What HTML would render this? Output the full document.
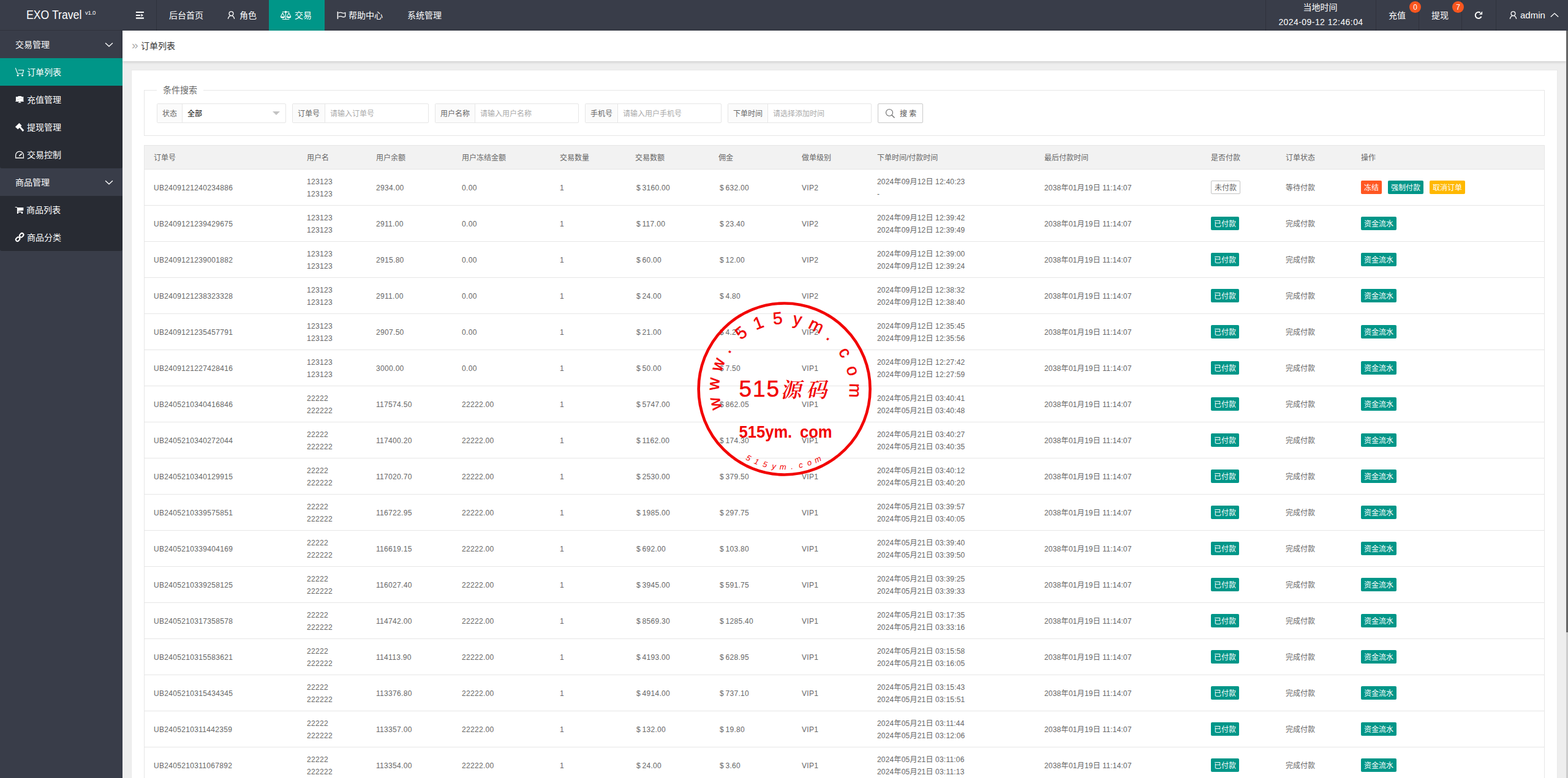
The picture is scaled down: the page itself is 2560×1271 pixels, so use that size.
<!DOCTYPE html>
<html lang="zh-CN">
<head>
<meta charset="utf-8">
<title>订单列表 · EXO Travel</title>
<style>
*{box-sizing:border-box}
html,body{margin:0;padding:0}
body{width:2560px;height:1271px;overflow:hidden;position:relative;background:#eee;font-family:"Liberation Sans","Noto Sans CJK SC",sans-serif;font-size:14px;color:#333;line-height:20px}
.side{position:absolute;left:0;top:0;width:200px;height:1271px;background:#393d49;color:#fff}
.logo{position:absolute;left:0;top:0;width:200px;height:50px;border-bottom:1px solid #30333d;white-space:nowrap}
.logo b{position:absolute;left:42.8px;top:0;height:50px;line-height:49px;font-weight:normal;font-size:19.5px;transform:scaleX(.906);transform-origin:0 0}
.logo sup{position:absolute;left:139px;top:14px;font-size:9.5px;line-height:14px;font-weight:normal;letter-spacing:-.2px}
.grp{position:absolute;left:0;width:200px;height:45px;line-height:47px;padding-left:25px;font-size:14px}
.grp svg{position:absolute}
.sub{position:absolute;left:0;width:200px;background:#282b33;border-radius:0 0 3px 3px}
.it{position:relative;height:45px;line-height:47px;padding-left:44px;font-size:14px;white-space:nowrap}
.it.on{background:#009688}
.it svg{position:absolute;left:20px;top:10px}
.head{position:absolute;left:200px;top:0;width:2360px;height:50px;background:#393d49;color:#fff}
.nv{position:absolute;top:0;height:50px;line-height:50px;font-size:14px;white-space:nowrap}
.nv.on{background:#009688}
.nv svg{position:absolute}
.vl{position:absolute;top:0;width:1px;height:50px;background:#30333d}
.crumb{position:absolute;left:200px;top:50px;width:2357px;height:50px;background:#fff;box-shadow:0 1px 5px rgba(0,0,0,.18);line-height:50px;font-size:14px;color:#333}
.crumb .raq{position:absolute;left:15px;top:-1px;color:#aaa;font-size:19px}
.crumb .ttl{position:absolute;left:30px;top:0}
.card{position:absolute;left:215px;top:115px;width:2327px;height:1200px;background:#fff;box-shadow:0 0 0 1px #e9e9e9}
.fs{position:absolute;left:20px;top:32px;width:2287px;height:75px;border:1px solid #e6e6e6}
.lg{position:absolute;left:20px;top:-11px;height:20px;line-height:20px;padding:0 10px;background:#fff;font-size:14px;color:#666}
.ig{position:absolute;top:21px;height:32px;border:1px solid #e6e6e6;border-radius:2px;background:#fff;font-size:12px;line-height:32px;white-space:nowrap}
.ig b{position:absolute;left:0;top:0;height:30px;font-weight:normal;background:#fbfbfb;border-right:1px solid #e6e6e6;color:#666;text-align:center}
.ig u{position:absolute;top:0;height:30px;text-decoration:none;color:#aaa}
.ig u.v{color:#000}
.tri{position:absolute;right:9px;top:12px;width:0;height:0;border:6px solid transparent;border-top-color:#c2c2c2}
.sb{position:absolute;top:21px;height:32px;border:1px solid #c9c9c9;border-radius:2px;background:#fff;font-size:12px;line-height:32px;color:#555;white-space:nowrap}
.tb{position:absolute;left:20px;top:122px;width:2287px;border-collapse:separate;border-spacing:0;table-layout:fixed;border:1px solid #e6e6e6;border-bottom:0;font-size:12px;color:#666}
.tb th{height:39px;padding:10px 15px 8px;background:#f2f2f2;border-bottom:1px solid #e6e6e6;text-align:left;font-weight:normal;line-height:20px;white-space:nowrap}
.tb td{height:59px;padding:10px 15px 8px;border-bottom:1px solid #e6e6e6;line-height:20px;white-space:nowrap;letter-spacing:.32px;vertical-align:middle}
.tb td.c{letter-spacing:0}
.tb td.m{padding-left:17px;word-spacing:-1.2px}
.tb td.t{letter-spacing:.2px}
.bdg{display:inline-block;height:22px;line-height:24px;position:relative;top:-1px;padding:0 5px;border-radius:2px;color:#fff;font-size:12px;vertical-align:middle}
.bdg.g{background:#009688}
.bdg.rim{border:1px solid #c2c2c2;background:#fff;color:#666;line-height:22px;padding:0 5px}
.btn{display:inline-block;height:22px;line-height:24px;position:relative;top:-1px;padding:0 5px;border-radius:2px;color:#fff;font-size:12px;margin-right:10px;vertical-align:middle}
.btn.g{background:#009688}.btn.o{background:#ff5722}.btn.y{background:#ffb800}
.sbar{position:absolute;left:2557px;top:50px;width:3px;height:1221px;background:#ccc}
.sbar i{position:absolute;left:0;top:0;width:3px;height:983px;background:#666}
.stamp{position:absolute;left:1130px;top:485px}
.dot{position:absolute;z-index:3;top:2px;width:19px;height:19px;border-radius:50%;background:#f9561f;color:#fff;font-size:12px;line-height:21px;text-align:center}

</style>
</head>
<body>
<div class="side">
<div class="logo"><b>EXO Travel</b><sup>v1.0</sup></div>
<div class="grp" style="top:50px">交易管理<svg style="left:165px;top:10px" width="25" height="25" viewBox="165 60 25 25"><path d="M172.100 70.200L178 75.800 183.900 70.200" fill="none" stroke="#fff" stroke-width="1.350"/></svg></div>
<div class="sub" style="top:95px;height:180px">
<div class="it on"><svg width="25" height="25" viewBox="20 105 25 25"><path d="M25.400 111.400L28.800 120.200H37.100L38.600 114.500H30.300" fill="none" stroke="#fff" stroke-width="1.150" stroke-linecap="round" stroke-linejoin="round"/><circle cx="29.100" cy="123.300" r="1.450" fill="#fff"/><circle cx="36.500" cy="123.300" r="1.450" fill="#fff"/></svg>订单列表</div>
<div class="it"><svg width="25" height="25" viewBox="20 150 25 25"><path d="M25.900 157.900H29.500V157H35V157.900H38.300V165L39.200 165.900H24.800L25.900 165Z M31.500 165.900H33V167.100H34.300V168H29.700V167.100H31.500Z" fill="#fff"/><path d="M28 162.600L30.800 162.200 33.500 160.800 35.800 160.400" fill="none" stroke="#bbb" stroke-width=".7"/></svg>充值管理</div>
<div class="it"><svg width="25" height="25" viewBox="20 195 25 25"><path d="M24.900 207.200L31.400 200.900 35.500 205.200 29.200 211.300Z M31.800 208.400L33.800 206.800 39.300 212.700 37.100 215.100Z" fill="#fff"/></svg>提现管理</div>
<div class="it"><svg width="25" height="25" viewBox="20 240 25 25"><path d="M25.600 257.500V253.800A6.400 6.400 0 0 1 38.400 253.800V257.500" fill="none" stroke="#fff" stroke-width="1.300"/><rect x="24.900" y="257.100" width="14.200" height="1.900" fill="#d2d2d2"/><path d="M31.800 254.400L35.200 251.500" fill="none" stroke="#fff" stroke-width="1.700" stroke-linecap="round"/></svg>交易控制</div>
</div>
<div class="grp" style="top:275px">商品管理<svg style="left:165px;top:10px" width="25" height="25" viewBox="165 60 25 25"><path d="M172.100 70.200L178 75.800 183.900 70.200" fill="none" stroke="#fff" stroke-width="1.350"/></svg></div>
<div class="sub" style="top:320px;height:90px">
<div class="it" style="padding-left:43px"><svg width="25" height="25" viewBox="20 330 25 25"><path d="M24.700 338H27.800L28.200 339H38.300V343.800L29.500 344.800V345.700H37.100V348.900H34.900V347.100H30V348.900H27.900V340L27.200 338.900H24.700Z" fill="#fff"/></svg>商品列表</div>
<div class="it"><svg width="25" height="25" viewBox="20 375 25 25"><g fill="none" stroke="#fff" stroke-width="2"><rect x="-3.500" y="-2.600" width="7" height="5.200" rx="2.600" transform="translate(35.200 384.300) rotate(-45)"/><rect x="-3.500" y="-2.600" width="7" height="5.200" rx="2.600" transform="translate(29.100 390.700) rotate(-45)"/></g></svg>商品分类</div>
</div>
</div>

<div class="head">
<div class="nv" style="left:0;width:55px"><svg style="left:15px;top:12px" width="25" height="25" viewBox="215 12 25 25"><path d="M221.900 19H234.900V21H221.900Z M221.900 24H229V26H221.900Z M221.900 28.600H234.900V30.700H221.900Z M230.400 22.600L234 24.900 230.400 27.200Z" fill="#fff"/></svg></div>
<div class="vl" style="left:55px"></div>
<div class="nv" style="left:56px;width:96px;padding-left:20px">后台首页</div>
<div class="nv" style="left:152px;width:87px;padding-left:39px"><svg style="left:13px;top:12px" width="25" height="25" viewBox="-12.500 12 25 25"><g fill="none" stroke="#fff" stroke-width="1.300"><circle cx="0" cy="22.200" r="3.400"/><path d="M-5.100 31A5.100 5.300 0 0 1 5.100 31"/></g></svg>角色</div>
<div class="nv on" style="left:239px;width:91px;padding-left:42px"><svg style="left:15px;top:12px" width="25" height="25" viewBox="455 12 25 25"><g fill="none" stroke="#fff" stroke-width="1.050"><path d="M461.900 19.500H473.300 M467.500 20.500V31.500 M461.900 31.500H473.300"/><circle cx="467.500" cy="19.500" r="1.200"/><path d="M459.300 27.200L462.500 21.300 465.700 27.200 M469.400 27.200L472.600 21.300 475.800 27.200"/></g><path d="M458.900 27A3.600 2.800 0 0 0 466.100 27Z M469 27A3.600 2.800 0 0 0 476.200 27Z" fill="#fff"/></svg>交易</div>
<div class="nv" style="left:330px;width:115px;padding-left:39px"><svg style="left:15px;top:12px" width="25" height="25" viewBox="545 12 25 25"><path d="M550.600 18.900H552.200V31.100H550.600Z" fill="#fff"/><path d="M552.600 21.300C555 20 557 20.300 558.800 21.100C560.500 21.800 562 21.700 563.700 20.800V27C562 28 560.500 28 558.800 27.300C557 26.500 555 26.300 552.600 27.500" fill="none" stroke="#fff" stroke-width="1.300"/></svg>帮助中心</div>
<div class="nv" style="left:445px;width:96px;padding-left:20px">系统管理</div>

<div class="vl" style="left:1866px"></div>
<div class="nv" style="left:1867px;width:179px;text-align:center;line-height:24px"><div style="height:24px;position:relative;left:-1px">当地时间</div><div style="height:24px;letter-spacing:.43px">2024-09-12 12:46:04</div></div>
<div class="vl" style="left:2046px"></div>
<div class="nv" style="left:2047px;width:69px;padding-left:20px">充值<span class="dot" style="left:54px">0</span></div>
<div class="vl" style="left:2116px"></div>
<div class="nv" style="left:2117px;width:69px;padding-left:20px">提现<span class="dot" style="left:54px">7</span></div>
<div class="vl" style="left:2186px"></div>
<div class="nv" style="left:2187px;width:55px"><svg style="left:13px;top:12px" width="25" height="25" viewBox="2400 12 25 25"><path d="M2416.700 20.600A5.100 5.100 0 1 0 2418.500 27" fill="none" stroke="#fff" stroke-width="2"/><path d="M2420.100 18.500V23.800H2414.900Z" fill="#fff"/></svg></div>
<div class="vl" style="left:2242px"></div>
<div class="nv" style="left:2243px;width:117px;padding-left:39px;font-size:15px"><svg style="left:14.500px;top:12px" width="25" height="25" viewBox="-12.500 12 25 25"><g fill="none" stroke="#fff" stroke-width="1.300"><circle cx="0" cy="22.200" r="3.400"/><path d="M-5.100 31A5.100 5.300 0 0 1 5.100 31"/></g></svg>admin<svg style="left:83px;top:12px" width="25" height="25" viewBox="2526 12 25 25"><path d="M2531.800 27.500L2538 21.800 2544.200 27.500" fill="none" stroke="#fff" stroke-width="1.350"/></svg></div>
</div>

<div class="crumb"><span class="raq">»</span><span class="ttl">订单列表</span></div>
<div class="card">
<div class="fs"><div class="lg">条件搜索</div>
<div class="ig" style="left:20px;width:211px"><b style="width:41px">状态</b><u class="v" style="left:49px">全部</u><i class="tri"></i></div>
<div class="ig" style="left:241px;width:223px"><b style="width:53px">订单号</b><u style="left:61px">请输入订单号</u></div>
<div class="ig" style="left:474px;width:235px"><b style="width:65px">用户名称</b><u style="left:73px">请输入用户名称</u></div>
<div class="ig" style="left:719px;width:223px"><b style="width:53px">手机号</b><u style="left:61px">请输入用户手机号</u></div>
<div class="ig" style="left:952px;width:235px"><b style="width:65px">下单时间</b><u style="left:73px">请选择添加时间</u></div>
<div class="sb" style="left:1197px;width:74px"><svg style="position:absolute;left:11px;top:7px" width="17" height="17" viewBox="0 0 17 17"><circle cx="7" cy="7" r="5.5" fill="none" stroke="#666" stroke-width="1.1"/><path d="M11 11l4.500 4.500" stroke="#666" stroke-width="1.300" fill="none"/></svg><span style="position:absolute;left:35px;top:0">搜 索</span></div>
</div>

<table class="tb"><colgroup><col style="width:250px"><col style="width:113px"><col style="width:140px"><col style="width:160px"><col style="width:123px"><col style="width:136px"><col style="width:136px"><col style="width:123px"><col style="width:273px"><col style="width:272px"><col style="width:122px"><col style="width:123px"><col style="width:314px"></colgroup>
<thead><tr><th>订单号</th><th>用户名</th><th>用户余额</th><th>用户冻结金额</th><th>交易数量</th><th>交易数额</th><th>佣金</th><th>做单级别</th><th>下单时间/付款时间</th><th>最后付款时间</th><th>是否付款</th><th>订单状态</th><th>操作</th></tr></thead><tbody>
<tr><td>UB2409121240234886</td><td>123123<br>123123</td><td>2934.00</td><td>0.00</td><td>1</td><td class="m">$ 3160.00</td><td class="m">$ 632.00</td><td>VIP2</td><td class="t">2024年09月12日 12:40:23<br>-</td><td class="t">2038年01月19日 11:14:07</td><td class="c"><span class="bdg rim">未付款</span></td><td class="c">等待付款</td><td class="c"><span class="btn o">冻结</span><span class="btn g">强制付款</span><span class="btn y">取消订单</span></td></tr>
<tr><td>UB2409121239429675</td><td>123123<br>123123</td><td>2911.00</td><td>0.00</td><td>1</td><td class="m">$ 117.00</td><td class="m">$ 23.40</td><td>VIP2</td><td class="t">2024年09月12日 12:39:42<br>2024年09月12日 12:39:49</td><td class="t">2038年01月19日 11:14:07</td><td class="c"><span class="bdg g">已付款</span></td><td class="c">完成付款</td><td class="c"><span class="btn g">资金流水</span></td></tr>
<tr><td>UB2409121239001882</td><td>123123<br>123123</td><td>2915.80</td><td>0.00</td><td>1</td><td class="m">$ 60.00</td><td class="m">$ 12.00</td><td>VIP2</td><td class="t">2024年09月12日 12:39:00<br>2024年09月12日 12:39:24</td><td class="t">2038年01月19日 11:14:07</td><td class="c"><span class="bdg g">已付款</span></td><td class="c">完成付款</td><td class="c"><span class="btn g">资金流水</span></td></tr>
<tr><td>UB2409121238323328</td><td>123123<br>123123</td><td>2911.00</td><td>0.00</td><td>1</td><td class="m">$ 24.00</td><td class="m">$ 4.80</td><td>VIP2</td><td class="t">2024年09月12日 12:38:32<br>2024年09月12日 12:38:40</td><td class="t">2038年01月19日 11:14:07</td><td class="c"><span class="bdg g">已付款</span></td><td class="c">完成付款</td><td class="c"><span class="btn g">资金流水</span></td></tr>
<tr><td>UB2409121235457791</td><td>123123<br>123123</td><td>2907.50</td><td>0.00</td><td>1</td><td class="m">$ 21.00</td><td class="m">$ 4.20</td><td>VIP2</td><td class="t">2024年09月12日 12:35:45<br>2024年09月12日 12:35:56</td><td class="t">2038年01月19日 11:14:07</td><td class="c"><span class="bdg g">已付款</span></td><td class="c">完成付款</td><td class="c"><span class="btn g">资金流水</span></td></tr>
<tr><td>UB2409121227428416</td><td>123123<br>123123</td><td>3000.00</td><td>0.00</td><td>1</td><td class="m">$ 50.00</td><td class="m">$ 7.50</td><td>VIP1</td><td class="t">2024年09月12日 12:27:42<br>2024年09月12日 12:27:59</td><td class="t">2038年01月19日 11:14:07</td><td class="c"><span class="bdg g">已付款</span></td><td class="c">完成付款</td><td class="c"><span class="btn g">资金流水</span></td></tr>
<tr><td>UB2405210340416846</td><td>22222<br>222222</td><td>117574.50</td><td>22222.00</td><td>1</td><td class="m">$ 5747.00</td><td class="m">$ 862.05</td><td>VIP1</td><td class="t">2024年05月21日 03:40:41<br>2024年05月21日 03:40:48</td><td class="t">2038年01月19日 11:14:07</td><td class="c"><span class="bdg g">已付款</span></td><td class="c">完成付款</td><td class="c"><span class="btn g">资金流水</span></td></tr>
<tr><td>UB2405210340272044</td><td>22222<br>222222</td><td>117400.20</td><td>22222.00</td><td>1</td><td class="m">$ 1162.00</td><td class="m">$ 174.30</td><td>VIP1</td><td class="t">2024年05月21日 03:40:27<br>2024年05月21日 03:40:35</td><td class="t">2038年01月19日 11:14:07</td><td class="c"><span class="bdg g">已付款</span></td><td class="c">完成付款</td><td class="c"><span class="btn g">资金流水</span></td></tr>
<tr><td>UB2405210340129915</td><td>22222<br>222222</td><td>117020.70</td><td>22222.00</td><td>1</td><td class="m">$ 2530.00</td><td class="m">$ 379.50</td><td>VIP1</td><td class="t">2024年05月21日 03:40:12<br>2024年05月21日 03:40:20</td><td class="t">2038年01月19日 11:14:07</td><td class="c"><span class="bdg g">已付款</span></td><td class="c">完成付款</td><td class="c"><span class="btn g">资金流水</span></td></tr>
<tr><td>UB2405210339575851</td><td>22222<br>222222</td><td>116722.95</td><td>22222.00</td><td>1</td><td class="m">$ 1985.00</td><td class="m">$ 297.75</td><td>VIP1</td><td class="t">2024年05月21日 03:39:57<br>2024年05月21日 03:40:05</td><td class="t">2038年01月19日 11:14:07</td><td class="c"><span class="bdg g">已付款</span></td><td class="c">完成付款</td><td class="c"><span class="btn g">资金流水</span></td></tr>
<tr><td>UB2405210339404169</td><td>22222<br>222222</td><td>116619.15</td><td>22222.00</td><td>1</td><td class="m">$ 692.00</td><td class="m">$ 103.80</td><td>VIP1</td><td class="t">2024年05月21日 03:39:40<br>2024年05月21日 03:39:50</td><td class="t">2038年01月19日 11:14:07</td><td class="c"><span class="bdg g">已付款</span></td><td class="c">完成付款</td><td class="c"><span class="btn g">资金流水</span></td></tr>
<tr><td>UB2405210339258125</td><td>22222<br>222222</td><td>116027.40</td><td>22222.00</td><td>1</td><td class="m">$ 3945.00</td><td class="m">$ 591.75</td><td>VIP1</td><td class="t">2024年05月21日 03:39:25<br>2024年05月21日 03:39:33</td><td class="t">2038年01月19日 11:14:07</td><td class="c"><span class="bdg g">已付款</span></td><td class="c">完成付款</td><td class="c"><span class="btn g">资金流水</span></td></tr>
<tr><td>UB2405210317358578</td><td>22222<br>222222</td><td>114742.00</td><td>22222.00</td><td>1</td><td class="m">$ 8569.30</td><td class="m">$ 1285.40</td><td>VIP1</td><td class="t">2024年05月21日 03:17:35<br>2024年05月21日 03:33:16</td><td class="t">2038年01月19日 11:14:07</td><td class="c"><span class="bdg g">已付款</span></td><td class="c">完成付款</td><td class="c"><span class="btn g">资金流水</span></td></tr>
<tr><td>UB2405210315583621</td><td>22222<br>222222</td><td>114113.90</td><td>22222.00</td><td>1</td><td class="m">$ 4193.00</td><td class="m">$ 628.95</td><td>VIP1</td><td class="t">2024年05月21日 03:15:58<br>2024年05月21日 03:16:05</td><td class="t">2038年01月19日 11:14:07</td><td class="c"><span class="bdg g">已付款</span></td><td class="c">完成付款</td><td class="c"><span class="btn g">资金流水</span></td></tr>
<tr><td>UB2405210315434345</td><td>22222<br>222222</td><td>113376.80</td><td>22222.00</td><td>1</td><td class="m">$ 4914.00</td><td class="m">$ 737.10</td><td>VIP1</td><td class="t">2024年05月21日 03:15:43<br>2024年05月21日 03:15:51</td><td class="t">2038年01月19日 11:14:07</td><td class="c"><span class="bdg g">已付款</span></td><td class="c">完成付款</td><td class="c"><span class="btn g">资金流水</span></td></tr>
<tr><td>UB2405210311442359</td><td>22222<br>222222</td><td>113357.00</td><td>22222.00</td><td>1</td><td class="m">$ 132.00</td><td class="m">$ 19.80</td><td>VIP1</td><td class="t">2024年05月21日 03:11:44<br>2024年05月21日 03:12:06</td><td class="t">2038年01月19日 11:14:07</td><td class="c"><span class="bdg g">已付款</span></td><td class="c">完成付款</td><td class="c"><span class="btn g">资金流水</span></td></tr>
<tr><td>UB2405210311067892</td><td>22222<br>222222</td><td>113354.00</td><td>22222.00</td><td>1</td><td class="m">$ 24.00</td><td class="m">$ 3.60</td><td>VIP1</td><td class="t">2024年05月21日 03:11:06<br>2024年05月21日 03:11:13</td><td class="t">2038年01月19日 11:14:07</td><td class="c"><span class="bdg g">已付款</span></td><td class="c">完成付款</td><td class="c"><span class="btn g">资金流水</span></td></tr>
</tbody></table>
</div>
<div class="sbar"><i></i></div>
<svg class="stamp" width="300" height="300" viewBox="0 0 300 300" font-family="'Liberation Sans','Noto Sans CJK SC',sans-serif" fill="#f20000">
<circle cx="150.6" cy="150.5" r="140" fill="none" stroke="#f20000" stroke-width="4.6"/>
<text font-size="28" stroke="#f20000" stroke-width=".5" x="48.5 43.6 47.2 60.4 79.5 104.3 132.8 163.5 188.2 217.4 238.3 251.5 257.3" y="182.5 153 123.2 93.7 70.9 54.3 45.2 44.6 50.2 67.5 89.6 115.6 141.1" rotate="-102 -85.9 -69.8 -55.7 -37.6 -21.5 -5.4 10.7 26.8 40.9 59 75.1 91.2">www.515ym.com</text>
<text x="76.5" y="162.8" font-size="37" textLength="65.5" lengthAdjust="spacing" stroke="#f20000" stroke-width=".5">515</text>
<text transform="translate(144.5 163.5) skewX(-12)" font-family="'Noto Serif CJK SC','Noto Sans CJK SC',serif" font-weight="600" font-size="34" textLength="76" lengthAdjust="spacing">源码</text>
<text font-size="27.5" font-weight="bold" x="76.5" y="230" word-spacing="6" textLength="152" lengthAdjust="spacingAndGlyphs">515ym. com</text>
<text font-size="13" font-style="italic" x="86.7 100.3 114.6 129.8 142.7 161.4 175 189.3 201.9" y="265.5 272.1 277 280.4 281.9 281.6 279.8 276.2 271.7" rotate="27.5 20.9 14.3 7.7 1.1 -5.5 -12.1 -18.7 -25.3">515ym.com</text>
</svg>

</body>
</html>
